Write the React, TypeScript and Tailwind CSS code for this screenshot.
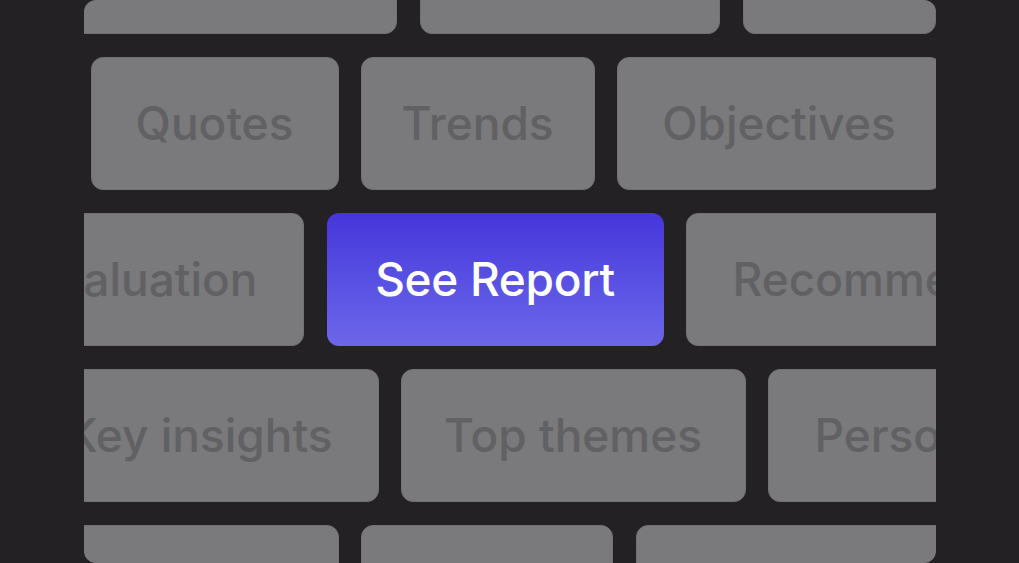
const tile =
  "h-[133px] shrink-0 rounded-[12px] border border-[#717072] bg-[#7a797b] flex items-center justify-center text-[46px] font-medium text-[#616062] whitespace-nowrap";

function Tile({ label, w, className = "" }: { label?: string; w?: string; className?: string }) {
  return <div className={`${tile} ${w ?? "px-[45px]"} ${className}`}>{label}</div>;
}

export default function App() {
  return (
    <div className="h-[563px] w-full bg-[#232124] flex justify-center overflow-hidden font-['Inter','Noto_Sans',sans-serif]">
      <div className="w-[852px] h-[563px] rounded-[12px] overflow-hidden flex flex-col gap-[23px]">
        {/* row 0 */}
        <div className="mt-[-99px] flex gap-[23px]">
          <div className="w-[313px] shrink-0 flex justify-end">
            <Tile w="w-[400px]" />
          </div>
          <Tile w="w-[300px]" />
          <Tile w="w-[193px]" />
        </div>

        {/* row 1 */}
        <div className="flex gap-[22px] pl-[7px]">
          <Tile label="Quotes" w="w-[248px]" />
          <Tile label="Trends" w="w-[234px]" />
          <Tile label="Objectives" w="w-[325px]" />
        </div>

        {/* row 2 */}
        <div className="flex gap-[22px]">
          <div className="w-[220px] shrink-0 flex justify-end">
            <Tile label="Evaluation" />
          </div>
          <button className="ml-px h-[133px] w-[337px] shrink-0 rounded-[12px] bg-gradient-to-b from-[#4635db] to-[#6d66ea] flex items-center justify-center text-[46px] font-medium tracking-[-0.3px] text-white whitespace-nowrap">
            See Report
          </button>
          <Tile label="Recommendations" w="pl-[46px] pr-[45px]" />
        </div>

        {/* row 3 */}
        <div className="flex gap-[22px]">
          <div className="w-[295px] shrink-0 flex justify-end">
            <Tile label="Key insights" />
          </div>
          <Tile label="Top themes" w="w-[345px]" />
          <Tile label="Personas" w="pl-[46px] pr-[45px]" />
        </div>

        {/* row 4 */}
        <div className="flex gap-[22px]">
          <div className="w-[255px] shrink-0 flex justify-end">
            <Tile w="w-[300px]" />
          </div>
          <Tile w="w-[252px]" />
          <Tile w="ml-px w-[320px]" />
        </div>
      </div>
    </div>
  );
}
